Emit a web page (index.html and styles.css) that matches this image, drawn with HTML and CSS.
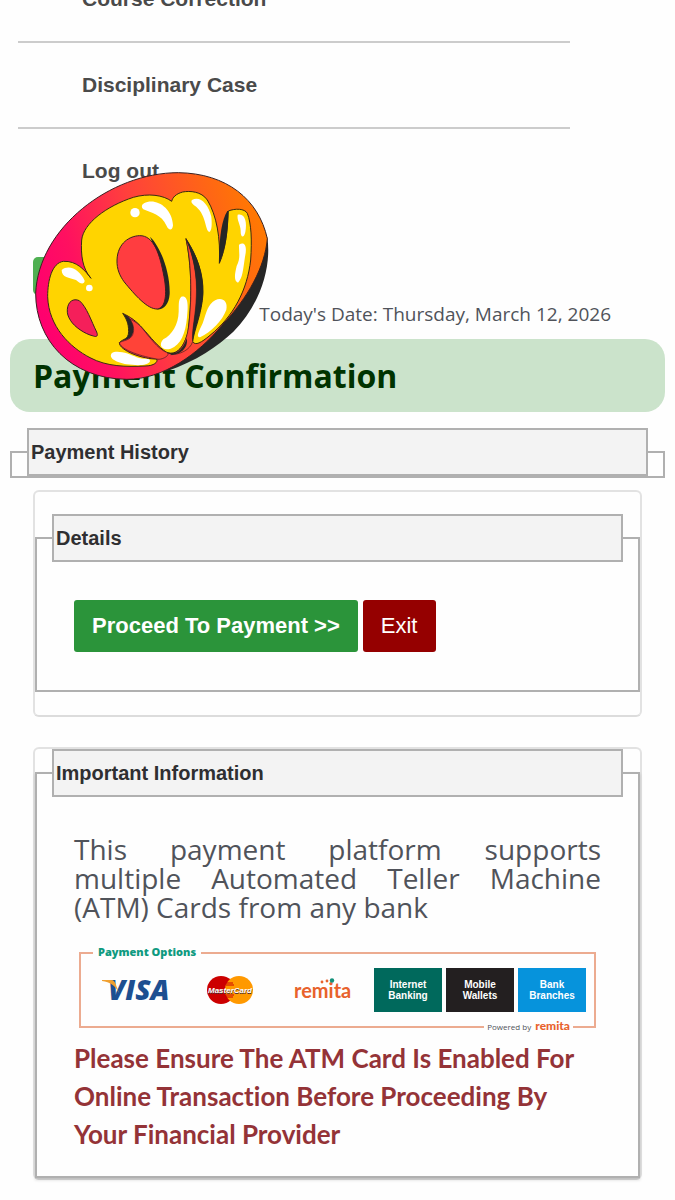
FILE: index.html
```html
<!DOCTYPE html>
<html lang="en">
<head>
  <meta charset="UTF-8">
  <meta name="viewport" content="width=device-width, initial-scale=1.0">
  <title>Payment Confirmation</title>
  <link rel="stylesheet" href="styles.css">
</head>
<body>
  <nav>
    <ul class="menu">
      <li><a href="#">Course Correction</a></li>
      <li><a href="#">Disciplinary Case</a></li>
      <li><a href="#">Log out</a></li>
    </ul>
  </nav>

  <div class="toolbar">
    <button class="menu-toggle" type="button" aria-label="Menu"></button>
    <svg class="sticker" viewBox="0 0 780 690" aria-hidden="true">
      <defs>
        <linearGradient id="stickerFill" x1="0" y1="0.6" x2="1" y2="0.3">
          <stop offset="0" stop-color="#ff006e"/>
          <stop offset="0.2" stop-color="#ff1060"/>
          <stop offset="0.5" stop-color="#ff403c"/>
          <stop offset="1" stop-color="#ff7a00"/>
        </linearGradient>
      </defs>
      <path fill="#262626" d="M742 232C756 330 715 440 640 515C592 560 530 602 440 634L420 610L650 370Z"/>
      <path fill="url(#stickerFill)" stroke="#3a2020" stroke-width="3" d="M475 38C620 40 716 118 742 236C735 320 685 412 606 496C535 582 430 658 320 658C150 656 47 540 47 400C55 205 270 38 475 38Z"/>
      <!-- dark edges behind the letters -->
      <g fill="#262626">
        <path d="M308 460C336 472 350 500 336 526C326 542 312 538 298 548L320 505Z"/>
        <path d="M498 236C530 280 550 335 550 400C548 450 530 500 518 548L522 400Z"/>
        <path d="M440 578C475 590 498 572 506 530L480 550Z"/>
      </g>
      <path fill="#ffd400" stroke="#3a2a10" stroke-width="3" stroke-linejoin="round" d="M213 355C194 330 170 302 130 304C96 309 83 360 83 410C86 500 150 562 210 593C260 620 320 621 375 618C402 618 415 606 410 597C370 598 298 572 298 548C310 535 325 540 326 515C326 488 318 475 308 460C330 470 350 484 368 505C392 532 415 562 440 577C470 588 493 560 504 515C512 450 520 345 498 236C532 290 550 340 549 400C546 460 522 510 518 545C526 558 544 548 570 526C640 470 682 390 692 300C696 240 694 190 682 160C674 145 645 145 625 153C622 210 618 265 598 310C602 235 590 166 562 120C544 94 510 92 488 96C467 102 458 112 455 124C430 105 385 99 340 112C260 138 190 190 185 240C182 285 187 325 213 355Z"/>
      <path fill="#ff4b33" stroke="#3a2020" stroke-width="2" d="M498 236C522 290 532 350 529 410C527 470 514 515 518 545C510 570 480 584 452 584C490 575 504 530 508 480C516 400 514 310 498 236Z"/>
      <path fill="#262626" d="M498 236C532 286 551 340 549 400C546 460 522 505 518 545C514 510 528 470 530 410C532 350 520 290 498 236Z"/>
      <path fill="#ff4338" stroke="#3a2020" stroke-width="2" d="M330 478C352 486 365 502 382 524C402 548 420 570 440 577C455 584 425 602 410 597C370 590 304 572 298 548C312 540 330 542 338 524C344 508 340 492 330 478Z"/>
      <path fill="#262626" d="M440 577C466 588 488 572 500 535C506 560 485 584 456 584Z"/>
      <path fill="#262626" d="M622 153C604 180 596 245 598 310C618 265 625 210 625 153Z"/>
      <path fill="#262626" d="M390 230C422 260 451 338 449 402C447 434 430 450 410 448C440 410 430 320 390 230Z"/>
      <path fill="#ff3d40" stroke="#3a2020" stroke-width="3" d="M291 300C293 248 330 228 358 227C402 225 420 285 432 350C442 402 437 444 412 447C382 448 345 405 312 365C300 348 290 328 291 300Z"/>
      <path fill="#f51f5a" stroke="#3a2020" stroke-width="3" d="M142 448C144 424 160 414 178 422C200 440 214 484 230 516C235 528 230 532 220 528C194 522 163 500 152 482C144 470 141 460 142 448Z"/>
      <g fill="#fff">
        <circle cx="345" cy="158" r="14"/>
        <path d="M372 130C404 112 456 140 459 196C457 215 445 210 440 198C424 162 394 160 370 148C364 142 364 135 372 130Z"/>
        <path d="M516 120C538 106 565 130 574 170C576 190 576 212 568 216C554 212 560 160 522 136C515 130 512 124 516 120Z"/>
        <path d="M653 164C675 158 682 186 676 216C671 238 661 231 662 212C661 192 650 180 653 164Z"/>
        <path d="M657 254C675 242 682 260 675 290C669 330 668 354 654 368C641 364 644 342 650 318C663 294 656 276 657 254Z"/>
        <path d="M125 330C150 310 182 334 194 362C193 376 178 370 168 360C148 352 125 354 125 330Z"/>
        <circle cx="208" cy="384" r="10"/>
        <path d="M484 410C505 404 505 438 501 472C497 520 482 556 452 566C425 574 414 554 430 538C456 524 475 494 476 455C477 435 474 420 484 410Z"/>
        <path d="M572 432C594 406 626 416 619 449C607 482 575 515 540 532C526 532 538 512 548 490C556 470 558 450 572 432Z"/>
        <path d="M275 580C290 568 330 582 350 592C370 600 391 592 390 604C384 618 350 617 320 613C292 608 264 596 275 580Z"/>
      </g>
    </svg>
  </div>

  <p class="date">Today's Date: Thursday, March 12, 2026</p>
  <h1 class="page-title">Payment Confirmation</h1>

  <fieldset class="box history">
    <legend>Payment History</legend>
  </fieldset>

  <main>
    <section class="panel panel-details">
      <fieldset class="box">
        <legend>Details</legend>
        <div class="actions">
          <button class="btn btn-pay" type="button">Proceed To Payment &gt;&gt;</button>
          <button class="btn btn-exit" type="button">Exit</button>
        </div>
      </fieldset>
    </section>

    <section class="panel">
      <fieldset class="box shadow">
        <legend>Important Information</legend>
        <div class="info">
          <p class="lead">This payment platform supports multiple Automated Teller Machine (ATM) Cards from any bank</p>

          <div class="options">
            <span class="options-title">Payment Options</span>
            <div class="brands">
              <svg class="visa" viewBox="0 0 74 30" role="img" aria-label="Visa">
                <text class="visa-name" x="6" y="25">VISA</text>
                <path fill="#f0a030" d="M0 5H9C12 5 13 7 14 10L17 18C13 10 8 7 0 6Z"/>
              </svg>
              <svg class="mastercard" viewBox="0 0 48 30" role="img" aria-label="MasterCard">
                <circle cx="15" cy="15" r="14" fill="#c00"/>
                <circle cx="33" cy="15" r="14" fill="#f90"/>
                <path d="M20 8h7M20 10h8M20 20h8M20 22h7" stroke="#c00"/>
                <text class="mc-name mc-shade" x="24" y="19">MasterCard</text>
                <text class="mc-name" x="24" y="18">MasterCard</text>
              </svg>
              <span class="remita">remita
                <svg class="remita-dots" viewBox="0 0 16 6"><circle cx="3" cy="4" r="1.4" fill="#e8622c"/><circle cx="8" cy="3" r="1.4" fill="#e8622c"/><circle cx="13" cy="2.5" r="2.2" fill="#12907a"/></svg>
              </span>
            </div>
            <div class="tiles">
              <span class="tile tile-internet">Internet<br>Banking</span>
              <span class="tile tile-mobile">Mobile<br>Wallets</span>
              <span class="tile tile-bank">Bank<br>Branches</span>
            </div>
            <span class="powered">Powered by <b>remita</b></span>
          </div>

          <p class="notice">Please Ensure The ATM Card Is Enabled For Online Transaction Before Proceeding By Your Financial Provider</p>
        </div>
      </fieldset>
    </section>
  </main>
</body>
</html>
```

FILE: styles.css
```css
* { box-sizing: border-box; }
body {
  margin: 0;
  background: #fefefe;
  color: #50535a;
  font-family: "Open Sans", "Noto Sans", sans-serif;
  overflow-x: hidden;
}
p, h1, ul { margin: 0; padding: 0; }

/* menu */
.menu {
  list-style: none;
  margin: -43px 105px 0 18px;
}
.menu li {
  height: 86px;
  border-bottom: 2px solid #ccc;
}
.menu li:last-child { border-bottom: 0; }
.menu a {
  display: block;
  padding-left: 64px;
  font: bold 21px/84px "Liberation Sans", Arial, sans-serif;
  color: #4a4a4a;
  text-decoration: none;
}
.toolbar {
  position: relative;
  padding: 42px 33px 0;
}
.menu-toggle {
  display: block;
  width: 60px; height: 38px;
  border: 0; border-radius: 5px;
  background: #4fb052;
}
.sticker {
  position: absolute;
  left: 20px; top: -55px;
  width: 260px; height: 230px;
  z-index: 2;
}

.date {
  padding: 6px 64px 12px;
  font-size: 19px; line-height: 26px;
  text-align: right;
}
.page-title {
  margin: 0 10px 16px;
  padding: 15px 23px 14px;
  border-radius: 20px;
  background: #cbe3cb;
  color: #003300;
  font-size: 32px; line-height: 44px;
}

/* boxes */
.box {
  min-width: 0;
  margin: 0;
  padding: 0 15px;
  border: 2px solid #b0b0b0;
}
.box legend {
  width: 100%;
  padding: 0 2px;
  border: 2px solid #b0b0b0;
  background: #f3f3f3;
  color: #2f2f31;
  font: bold 20px/44px "Liberation Sans", Arial, sans-serif;
}
.history { margin: 0 10px 12px; }
.panel {
  margin: 0 33px 30px;
  border: 2px solid #e2e2e2;
  border-bottom-color: #dcdcdc;
  border-radius: 6px;
}
.panel-details { padding: 22px 0 23px; }
.shadow { box-shadow: 0 2px 3px rgba(0,0,0,0.15); }

.actions {
  display: flex; gap: 5px;
  padding: 38px 22px;
}
.btn {
  height: 52px;
  padding: 0 18px;
  border: 0; border-radius: 3px;
  color: #fff;
  font: 22px "Liberation Sans", Arial, sans-serif;
  cursor: pointer;
}
.btn-pay { background: #2b943a; font-weight: bold; }
.btn-exit { background: #950000; }

.info { padding: 38px 22px 23px; }
.lead {
  font-size: 28px; line-height: 29px;
  text-align: justify;
}

/* payment options */
.options {
  position: relative;
  display: flex; justify-content: space-between; align-items: center;
  height: 76px;
  margin: 30px 5px 11px;
  padding: 0 8px 0 21px;
  border: 2px solid #ecab90;
}
.options-title {
  position: absolute;
  left: 12px; top: -10px;
  padding: 0 5px;
  background: #fefefe;
  color: #0f9a80;
  font-size: 11px; line-height: 16px; font-weight: 800;
}
.brands { display: flex; align-items: center; }
.visa { width: 74px; height: 30px; }
.visa-name {
  fill: #1d4f91;
  font: italic 800 28px "Open Sans", sans-serif;
}
.mastercard { width: 48px; height: 30px; margin: 0 40px 0 30px; }
.mc-name {
  fill: #fff;
  font: italic bold 8px "Liberation Sans", Arial, sans-serif;
  text-anchor: middle;
}
.mc-shade { fill: #503030; }
.remita {
  position: relative;
  color: #e8622c;
  font: bold 20px/28px Lato, sans-serif;
}
.remita-dots {
  position: absolute;
  left: 25px; top: 2px;
  width: 16px; height: 6px;
}
.tiles { display: flex; gap: 4px; }
.tile {
  width: 68px; height: 44px;
  padding-top: 11px;
  color: #fff;
  font: bold 10px/11px "Liberation Sans", Arial, sans-serif;
  text-align: center;
}
.tile-internet { background: #00695c; }
.tile-mobile { background: #231f20; }
.tile-bank { background: #0693dc; }
.powered {
  position: absolute;
  right: 21px; bottom: -8px;
  padding: 0 3px;
  background: #fefefe;
  font-size: 8px; line-height: 14px;
}
.powered b {
  margin-left: 2px;
  color: #e8622c;
  font: 900 12px/14px Lato, sans-serif;
}

.notice {
  color: #943337;
  font: bold 26px/38px Lato, sans-serif;
  font-variant-ligatures: none;
}
```
